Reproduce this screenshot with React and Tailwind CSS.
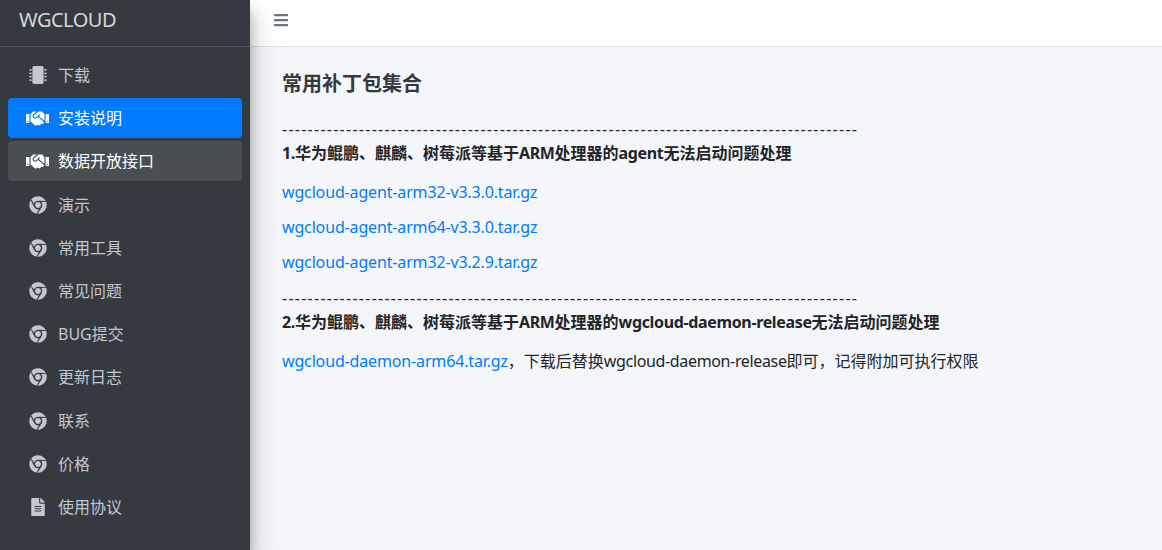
import React from 'react';
import { FaMicrochip, FaHandshake, FaChrome, FaFileAlt, FaBars } from 'react-icons/fa';

const font = 'font-["Noto_Sans","Noto_Sans_CJK_SC",sans-serif]';

const navItems = [
    { label: '下载', icon: FaMicrochip },
    { label: '安装说明', icon: FaHandshake, active: true },
    { label: '数据开放接口', icon: FaHandshake, hover: true },
    { label: '演示', icon: FaChrome },
    { label: '常用工具', icon: FaChrome },
    { label: '常见问题', icon: FaChrome },
    { label: 'BUG提交', icon: FaChrome },
    { label: '更新日志', icon: FaChrome },
    { label: '联系', icon: FaChrome },
    { label: '价格', icon: FaChrome },
    { label: '使用协议', icon: FaFileAlt },
];

const dashes = '-'.repeat(90);

function NavItem({ item }) {
    const Icon = item.icon;
    let tone = 'text-[#c2c7d0]';
    if (item.active) tone = 'bg-[#007bff] text-white';
    if (item.hover) tone = 'bg-[#494e53] text-white';
    return (
        <li className={`flex h-10 mb-[3.2px] items-center rounded pl-[17px] ${tone}`}>
            <span className="flex w-[25px] mr-[8px] justify-center">
                <Icon size={item.icon === FaHandshake ? 23 : 18} />
            </span>
            <span className="text-base">{item.label}</span>
        </li>
    );
}

function PatchLink({ children }) {
    return <a className="text-[#007bff] tracking-[-0.15px]">{children}</a>;
}

function Latin({ children }) {
    return <span className="tracking-[-0.35px]">{children}</span>;
}

export default function App() {
    return (
        <div className={`flex h-[550px] w-[1162px] overflow-hidden bg-[#f4f6f9] text-base text-[#212529] ${font}`}>
            <aside className="z-10 w-[250px] shrink-0 bg-[#343a40] shadow-[0_14px_28px_rgba(0,0,0,0.25),0_10px_10px_rgba(0,0,0,0.22)]">
                <div className="h-[47px] border-b border-[#4b545c] pl-[19px] text-[20px] leading-[39px] tracking-[-0.5px] text-[#d5d8dc]">
                    WGCLOUD
                </div>
                <ul className="px-2 pt-2">
                    {navItems.map((item) => (
                        <NavItem key={item.label} item={item} />
                    ))}
                </ul>
            </aside>

            <main className="min-w-0 flex-1">
                <header className="flex h-[47px] items-center border-b border-[#dee2e6] bg-white pb-[6px] pl-[23px] text-[#6c757d]">
                    <FaBars size={16} />
                </header>
                <section className="px-8 pt-[22px]">
                    <h1 className="text-[20px] font-bold leading-[30px] text-[#343a40]">常用补丁包集合</h1>
                    <div className="mt-[18px] leading-[24px] tracking-[1.25px]">{dashes}</div>
                    <div className="font-bold leading-[24px]"><Latin>1.</Latin>华为鲲鹏、麒麟、树莓派等基于<Latin>ARM</Latin>处理器的<Latin>agent</Latin>无法启动问题处理</div>
                    <div className="mt-[15px] leading-[24px]"><PatchLink>wgcloud-agent-arm32-v3.3.0.tar.gz</PatchLink></div>
                    <div className="mt-[11px] leading-[24px]"><PatchLink>wgcloud-agent-arm64-v3.3.0.tar.gz</PatchLink></div>
                    <div className="mt-[11px] leading-[24px]"><PatchLink>wgcloud-agent-arm32-v3.2.9.tar.gz</PatchLink></div>
                    <div className="mt-[12px] leading-[24px] tracking-[1.25px]">{dashes}</div>
                    <div className="font-bold leading-[24px]"><Latin>2.</Latin>华为鲲鹏、麒麟、树莓派等基于<Latin>ARM</Latin>处理器的<Latin>wgcloud-daemon-release</Latin>无法启动问题处理</div>
                    <div className="mt-[15px] leading-[24px]">
                        <PatchLink>wgcloud-daemon-arm64.tar.gz</PatchLink>，下载后替换<Latin>wgcloud-daemon-release</Latin>即可，记得附加可执行权限
                    </div>
                </section>
            </main>
        </div>
    );
}
